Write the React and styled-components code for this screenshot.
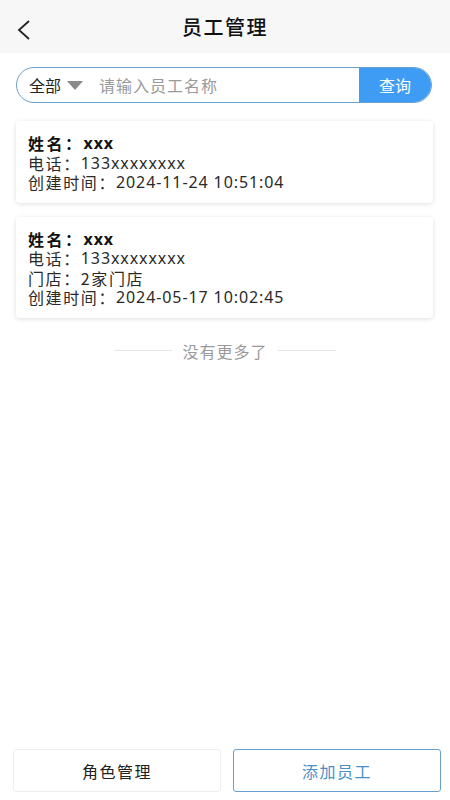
import React from "react";
import styled, { createGlobalStyle } from "styled-components";

const GlobalStyle = createGlobalStyle`
  html, body {
    margin: 0;
    padding: 0;
    background: #fff;
    font-family: "Noto Sans CJK SC", "Noto Sans", sans-serif;
  }
`;

const Page = styled.div`
  width: 450px;
  height: 800px;
  display: flex;
  flex-direction: column;
  background: #fff;
`;

const Header = styled.div`
  height: 53px;
  background: #f7f7f7;
  display: flex;
  align-items: center;
  justify-content: center;
  position: relative;
`;

const BackButton = styled.div`
  position: absolute;
  left: 16px;
  top: 18px;
  width: 16px;
  height: 24px;
`;

const Title = styled.h1`
  margin: 0;
  font-size: 20px;
  font-weight: 500;
  color: #111;
  letter-spacing: 1.5px;
`;

const SearchBar = styled.div`
  margin: 14px 18px 0 16px;
  height: 34px;
  display: flex;
  border: 1px solid #6aa0cc;
  border-radius: 18px;
  overflow: hidden;
`;

const Filter = styled.div`
  display: flex;
  align-items: center;
  padding-left: 12px;
  font-size: 16px;
  color: #222;
`;

const Caret = styled.span`
  width: 0;
  height: 0;
  margin-left: 6px;
  border-left: 8px solid transparent;
  border-right: 8px solid transparent;
  border-top: 9px solid #8a8a8a;
`;

const Input = styled.input`
  flex: 1;
  min-width: 0;
  border: none;
  outline: none;
  padding: 0 0 0 16px;
  font-size: 16px;
  letter-spacing: 1px;
  font-family: inherit;
  background: transparent;
  color: #222;
  &::placeholder {
    color: #9a9a9a;
  }
`;

const SearchButton = styled.button`
  width: 72px;
  border: none;
  background: #3f9cf5;
  color: #fff;
  font-size: 16px;
  font-family: inherit;
  padding: 0;
`;

const List = styled.div`
  display: flex;
  flex-direction: column;
  gap: 14px;
  padding: 18px 17px 0 16px;
`;

const Card = styled.div`
  background: #fff;
  border-radius: 4px;
  box-shadow: 0 1px 5px rgba(0, 0, 0, 0.13);
  padding: 13px 12px 10px 12px;
  display: flex;
  flex-direction: column;
`;

const Line = styled.div`
  height: 19.5px;
  font-size: 16px;
  line-height: 19.5px;
  letter-spacing: ${p => (p.$bold ? "2.5px" : "1.6px")};
  white-space: nowrap;
  color: ${p => (p.$bold ? "#111" : "#2a2a2a")};
  font-weight: ${p => (p.$bold ? 700 : 400)};
`;

const Value = styled.span`
  font-family: "Noto Sans", "Noto Sans CJK SC", sans-serif;
  letter-spacing: 0.9px;
  line-height: 19.5px;
  vertical-align: top;
`;

const NoMore = styled.div`
  margin-top: 22px;
  display: flex;
  align-items: center;
  justify-content: center;
  gap: 10px;
  color: #999;
  font-size: 16px;
  letter-spacing: 1px;
  line-height: 22px;
`;

const Rule = styled.span`
  width: 58px;
  height: 1px;
  background: #e6e6e6;
`;

const Spacer = styled.div`
  flex: 1;
`;

const Footer = styled.div`
  display: flex;
  gap: 12px;
  padding: 0 9px 8px 13px;
`;

const FooterButton = styled.button`
  flex: 1;
  height: 43px;
  background: #fff;
  border: 1px solid ${p => (p.$primary ? "#6aa0cc" : "#eeeeee")};
  border-radius: 3px;
  color: ${p => (p.$primary ? "#4a8fc6" : "#222")};
  font-size: 16px;
  font-family: inherit;
  letter-spacing: 1.5px;
`;

const staff = [
  { name: "xxx", phone: "133xxxxxxxx", created: "2024-11-24 10:51:04" },
  {
    name: "xxx",
    phone: "133xxxxxxxx",
    store: "2家门店",
    created: "2024-05-17 10:02:45",
  },
];

export default function App() {
  return (
    <>
      <GlobalStyle />
      <Page>
        <Header>
          <BackButton>
            <svg width="16" height="24" viewBox="0 0 16 24">
              <path d="M13 3 L3 12 L13 21" fill="none" stroke="#222" strokeWidth="1.8" />
            </svg>
          </BackButton>
          <Title>员工管理</Title>
        </Header>

        <SearchBar>
          <Filter>
            全部
            <Caret />
          </Filter>
          <Input placeholder="请输入员工名称" />
          <SearchButton>查询</SearchButton>
        </SearchBar>

        <List>
          {staff.map((s, i) => (
            <Card key={i}>
              <Line $bold>
                姓名：<Value>{s.name}</Value>
              </Line>
              <Line>
                电话：<Value>{s.phone}</Value>
              </Line>
              {s.store && <Line>门店：{s.store}</Line>}
              <Line>
                创建时间：<Value>{s.created}</Value>
              </Line>
            </Card>
          ))}
        </List>

        <NoMore>
          <Rule />
          没有更多了
          <Rule />
        </NoMore>

        <Spacer />

        <Footer>
          <FooterButton>角色管理</FooterButton>
          <FooterButton $primary>添加员工</FooterButton>
        </Footer>
      </Page>
    </>
  );
}
